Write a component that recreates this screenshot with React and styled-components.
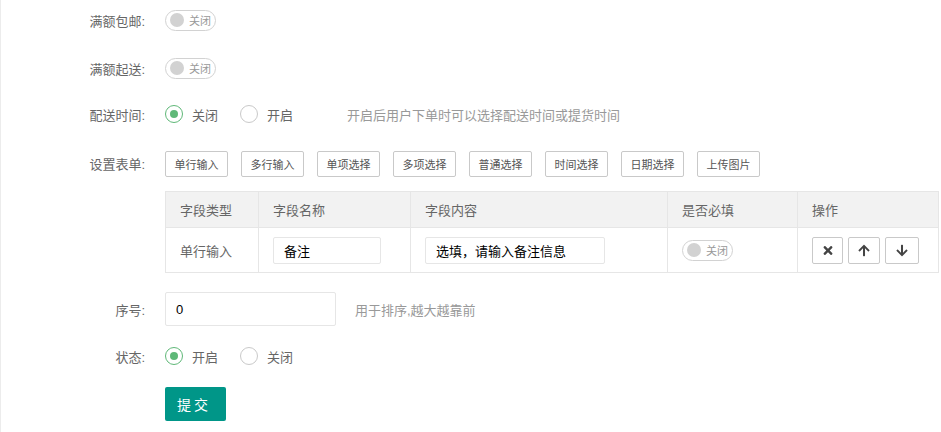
import React from 'react'
import styled, { createGlobalStyle } from 'styled-components'
import { FaTimes, FaArrowUp, FaArrowDown } from 'react-icons/fa'

const GlobalStyle = createGlobalStyle`
  html, body {
    margin: 0;
    padding: 0;
    background: #fff;
  }
  body {
    font-family: "Liberation Sans", "Noto Sans CJK SC", sans-serif;
    color: #666;
    font-size: 13px;
  }
`

const Page = styled.div`
  border-left: 1px solid #ececec;
  min-height: 432px;
  box-sizing: border-box;
  padding-top: 1px;
`

const FormItem = styled.div`
  display: flex;
  align-items: ${p => (p.$top ? 'flex-start' : 'center')};
  min-height: ${p => p.$h || 38}px;
  margin-top: ${p => p.$mt || 0}px;
`

const Label = styled.label`
  width: 144px;
  flex: none;
  text-align: right;
  margin-right: 20px;
  font-size: 13px;
  color: #666;
  padding-top: ${p => p.$pt || 0}px;
`

const Content = styled.div`
  display: flex;
  align-items: center;
  flex: 1;
`

const Block = styled.div`
  flex: 1;
  padding-right: 3px;
`

const SwitchBox = styled.div`
  width: 51px;
  height: 21px;
  box-sizing: border-box;
  border: 1px solid #d2d2d2;
  border-radius: 20px;
  display: flex;
  align-items: center;
  padding-left: 4px;
  gap: 5px;
  font-size: 11px;
  color: #999;
`

const Knob = styled.span`
  width: 14px;
  height: 14px;
  border-radius: 50%;
  background: #d2d2d2;
`

const Switch = ({ text = '关闭' }) => (
  <SwitchBox>
    <Knob />
    {text}
  </SwitchBox>
)

const RadioItem = styled.span`
  display: inline-flex;
  align-items: center;
  gap: 9px;
  margin-right: 22px;
  font-size: 13px;
  color: #666;
`

const RadioCircle = styled.span`
  width: 18px;
  height: 18px;
  box-sizing: border-box;
  border-radius: 50%;
  border: 1px solid ${p => (p.$on ? '#5fb878' : '#c9c9c9')};
  display: flex;
  align-items: center;
  justify-content: center;
  &::after {
    content: '';
    width: 8px;
    height: 8px;
    border-radius: 50%;
    background: ${p => (p.$on ? '#5fb878' : 'transparent')};
  }
`

const Radio = ({ on, children }) => (
  <RadioItem>
    <RadioCircle $on={on} />
    {children}
  </RadioItem>
)

const Hint = styled.span`
  color: #999;
  font-size: 13px;
  margin-left: ${p => p.$ml || 0}px;
`

const ButtonRow = styled.div`
  display: flex;
  gap: 13px;
  margin-top: 6px;
`

const TypeButton = styled.button`
  width: 63px;
  height: 26px;
  padding: 0;
  border: 1px solid #c9c9c9;
  border-radius: 2px;
  background: #fff;
  color: #555;
  font-family: inherit;
  font-size: 11px;
`

const Table = styled.table`
  width: 773px;
  margin-top: 14px;
  border-collapse: collapse;
  table-layout: fixed;
  th, td {
    border: 1px solid #e6e6e6;
    padding: 0 13px 0 14px;
    text-align: left;
    font-weight: normal;
    font-size: 13px;
    color: #666;
  }
  th {
    height: 35px;
    background: #f2f2f2;
  }
  td {
    height: 44px;
  }
`

const CellInput = styled.input`
  width: ${p => p.$w}px;
  height: 27px;
  box-sizing: border-box;
  border: 1px solid #e6e6e6;
  border-radius: 2px;
  padding: 0 10px;
  font-family: inherit;
  font-size: 13px;
  color: #000;
  outline: none;
`

const Actions = styled.div`
  display: flex;
  gap: 5px;
`

const IconButton = styled.button`
  width: ${p => p.$w || 32}px;
  height: 27px;
  border: 1px solid #c9c9c9;
  border-radius: 2px;
  background: #fff;
  color: #444;
  display: flex;
  align-items: center;
  justify-content: center;
  padding: 0;
  svg {
    width: 12px;
    height: 13px;
  }
`

const TextInput = styled.input`
  width: 171px;
  height: 34px;
  box-sizing: border-box;
  border: 1px solid #e6e6e6;
  border-radius: 2px;
  padding: 0 10px;
  font-family: inherit;
  font-size: 13px;
  color: #000;
  outline: none;
`

const SubmitButton = styled.button`
  width: 61px;
  height: 34px;
  border: none;
  border-radius: 2px;
  background: #009688;
  color: #fff;
  font-family: inherit;
  font-size: 14px;
  letter-spacing: 3px;
  padding-left: 3px;
`

const types = ['单行输入', '多行输入', '单项选择', '多项选择', '普通选择', '时间选择', '日期选择', '上传图片']

export default function App() {
  return (
    <Page>
      <GlobalStyle />
      <FormItem>
        <Label>满额包邮:</Label>
        <Content><Switch /></Content>
      </FormItem>
      <FormItem $mt={10}>
        <Label>满额起送:</Label>
        <Content><Switch /></Content>
      </FormItem>
      <FormItem $mt={8}>
        <Label>配送时间:</Label>
        <Content>
          <Radio on>关闭</Radio>
          <Radio>开启</Radio>
          <Hint $ml={32}>开启后用户下单时可以选择配送时间或提货时间</Hint>
        </Content>
      </FormItem>
      <FormItem $mt={12} $top>
        <Label $pt={9}>设置表单:</Label>
        <Block>
          <ButtonRow>
            {types.map(t => (
              <TypeButton key={t}>{t}</TypeButton>
            ))}
          </ButtonRow>
          <Table>
            <colgroup>
              <col style={{ width: 93 }} />
              <col style={{ width: 152 }} />
              <col style={{ width: 257 }} />
              <col style={{ width: 130 }} />
              <col style={{ width: 141 }} />
            </colgroup>
            <thead>
              <tr>
                <th>字段类型</th>
                <th>字段名称</th>
                <th>字段内容</th>
                <th>是否必填</th>
                <th>操作</th>
              </tr>
            </thead>
            <tbody>
              <tr>
                <td>单行输入</td>
                <td><CellInput $w={108} defaultValue="备注" /></td>
                <td><CellInput $w={180} defaultValue="选填，请输入备注信息" /></td>
                <td><Switch /></td>
                <td>
                  <Actions>
                    <IconButton $w={31}><FaTimes /></IconButton>
                    <IconButton $w={32}><FaArrowUp /></IconButton>
                    <IconButton $w={34}><FaArrowDown /></IconButton>
                  </Actions>
                </td>
              </tr>
            </tbody>
          </Table>
        </Block>
      </FormItem>
      <FormItem $mt={19} $h={34}>
        <Label>序号:</Label>
        <Content>
          <TextInput defaultValue="0" />
          <Hint $ml={19}>用于排序,越大越靠前</Hint>
        </Content>
      </FormItem>
      <FormItem $mt={11}>
        <Label>状态:</Label>
        <Content>
          <Radio on>开启</Radio>
          <Radio>关闭</Radio>
        </Content>
      </FormItem>
      <FormItem $mt={12} $h={34}>
        <Label />
        <Content>
          <SubmitButton>提交</SubmitButton>
        </Content>
      </FormItem>
    </Page>
  )
}
